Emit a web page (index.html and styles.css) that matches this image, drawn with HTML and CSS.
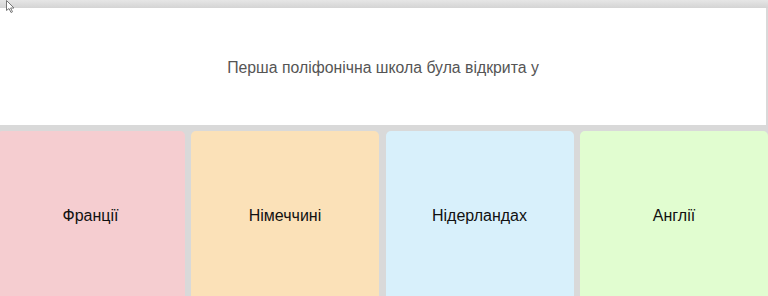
FILE: index.html
```html
<!DOCTYPE html>
<html lang="uk">
<head>
    <meta charset="UTF-8">
    <meta name="viewport" content="width=device-width, initial-scale=1.0">
    <title>Вікторина</title>
    <link rel="stylesheet" href="styles.css">
</head>
<body>
    <svg class="cursor" width="10" height="14" viewBox="0 0 10 14">
        <path d="M0.5 0.5 L0.5 10.5 L3 8.5 L5 12.5 L6.5 11.8 L4.6 8 L8 8 Z" fill="#fff" stroke="#777" stroke-width="1"/>
    </svg>
    <div class="topbar"></div>
    <div class="question">
        <p>Перша поліфонічна школа була відкрита у</p>
    </div>
    <div class="answers">
        <div class="answer red">Франції</div>
        <div class="answer orange">Німеччині</div>
        <div class="answer blue">Нідерландах</div>
        <div class="answer green">Англії</div>
    </div>
</body>
</html>
```

FILE: styles.css
```css
* {
    box-sizing: border-box;
}
body {
    margin: 0;
    background-color: #d9d9d9;
    font-family: "Liberation Sans", Arial, sans-serif;
    overflow: hidden;
}
.cursor {
    position: absolute;
    top: 0;
    left: 6px;
}
.topbar {
    height: 8px;
    background: linear-gradient(#e6e6e6, #d4d4d4);
}
.question {
    background-color: white;
    height: 117px;
    margin-right: 2px;
    display: flex;
    align-items: center;
    justify-content: center;
}
.question p {
    margin: 0;
    font-size: 15.8px;
    color: #555;
    padding-top: 3px;
}
.answers {
    display: grid;
    grid-template-columns: repeat(4, 188px);
    gap: 6.5px;
    margin-top: 6px;
    margin-left: -3.5px;
}
.answer {
    height: 170px;
    border-radius: 5px;
    display: flex;
    align-items: center;
    justify-content: center;
    font-size: 16px;
    color: #111;
}
.red { background-color: #f5cdd0; }
.orange { background-color: #fbe1b8; }
.blue { background-color: #d8f0fb; }
.green { background-color: #e1fdd0; }
```
